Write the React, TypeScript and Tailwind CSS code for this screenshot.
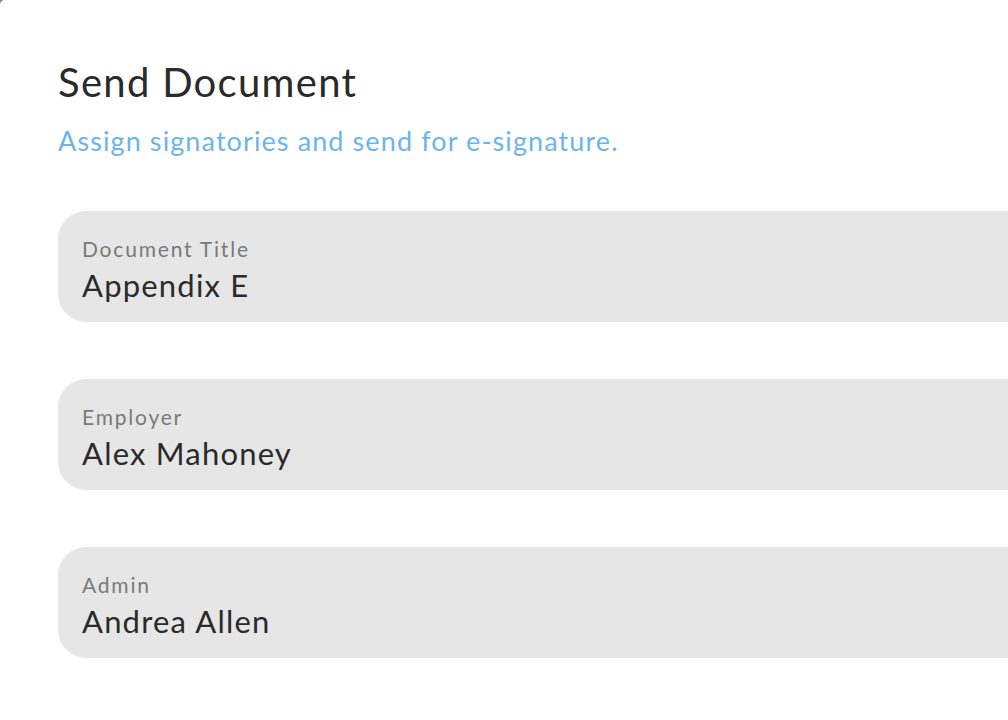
import React from "react";

const fields = [
  { label: "Document Title", value: "Appendix E" },
  { label: "Employer", value: "Alex Mahoney" },
  { label: "Admin", value: "Andrea Allen" },
];

function Field({ label, value }: { label: string; value: string }) {
  return (
    <div className="h-[111px] -mr-[60px] rounded-[28px] bg-[#e6e6e6] pl-6 pt-[26px]">
      <div className="text-[21px] leading-[24px] tracking-[1.8px] text-[#7a7a7a]">{label}</div>
      <div className="mt-[6px] text-[31px] leading-[36px] tracking-[1.2px] text-[#2a2a2a]">
        {value}
      </div>
    </div>
  );
}

export default function App() {
  return (
    <div className="h-[720px] w-[1008px] overflow-hidden bg-[#8a8a8a] font-['Lato','Noto_Sans',sans-serif]">
      <div className="h-full w-full rounded-tl-[5px] bg-white pl-[58px] pt-[59px]">
        <h1 className="text-[40px] leading-[46px] tracking-[1.3px] text-[#2a2a2a]">Send Document</h1>
        <p className="mt-[20px] text-[27px] leading-[32px] tracking-[1.1px] text-[#6cb4ef]">
          Assign signatories and send for e-signature.
        </p>
        <div className="mt-[54px] flex flex-col gap-[57px]">
          {fields.map((f) => (
            <Field key={f.label} label={f.label} value={f.value} />
          ))}
        </div>
      </div>
    </div>
  );
}
